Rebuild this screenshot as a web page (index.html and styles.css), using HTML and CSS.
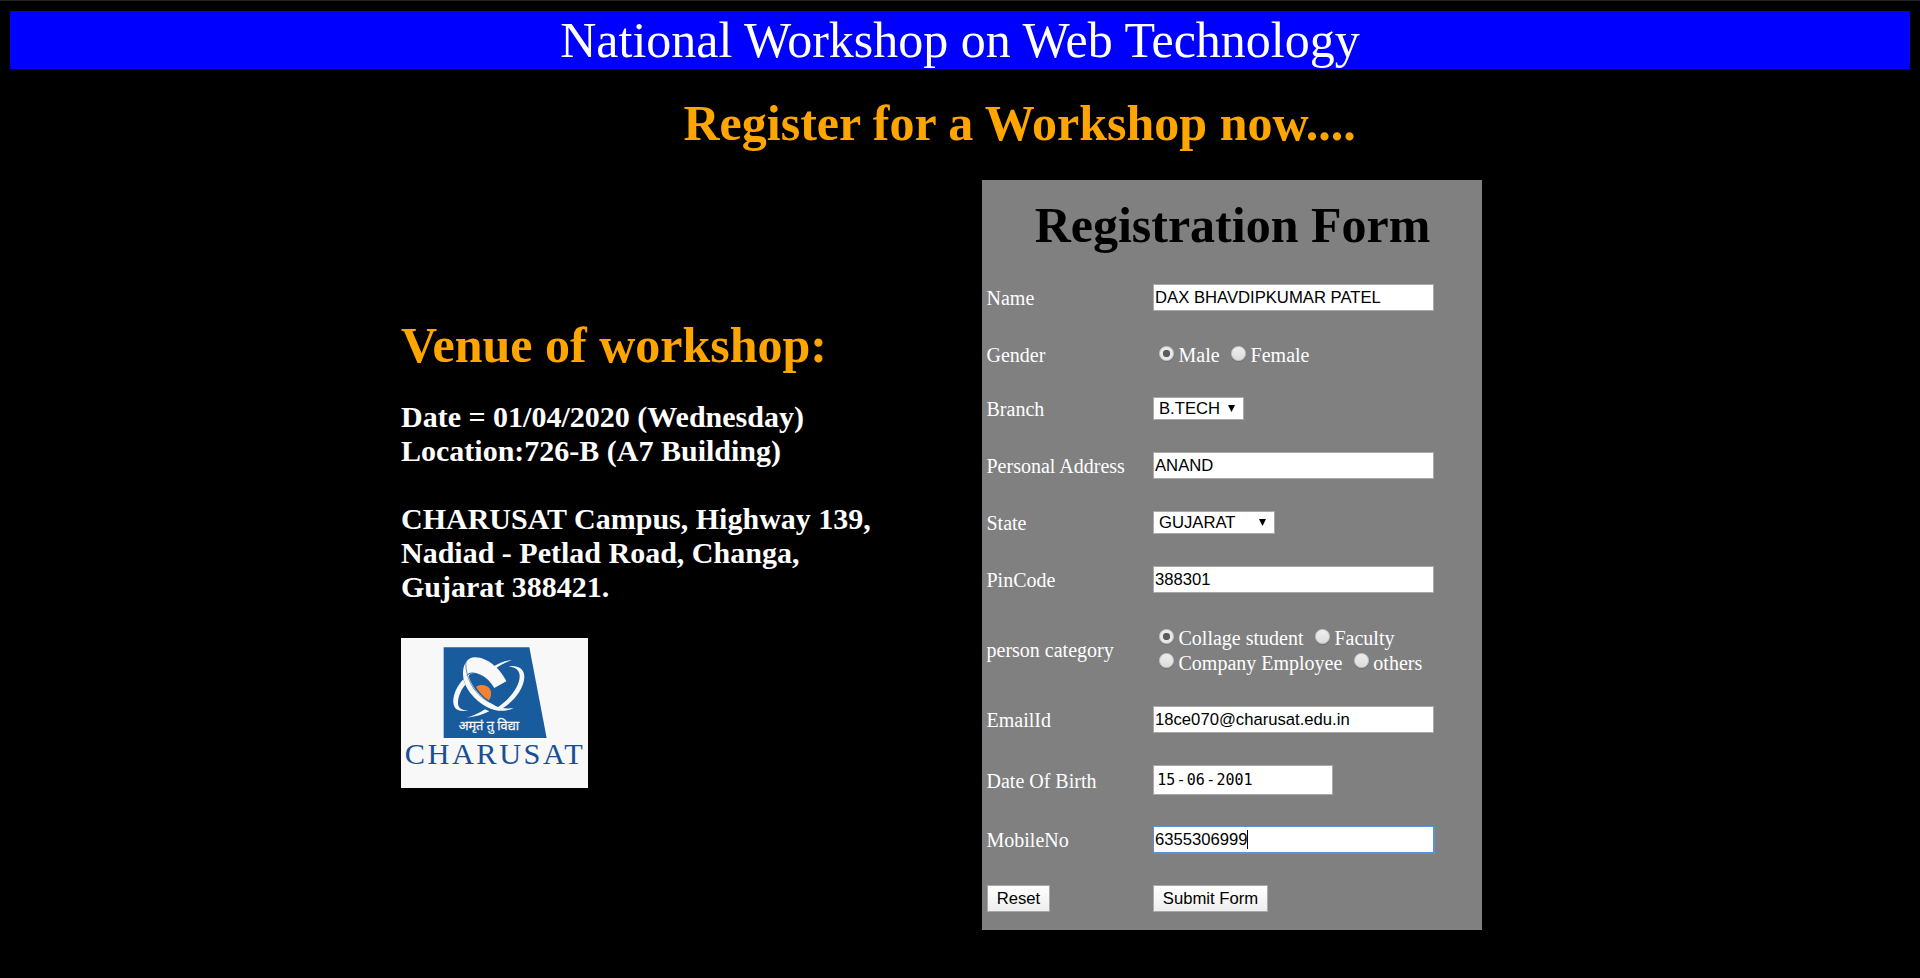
FILE: index.html
```html
<!DOCTYPE html>
<html lang="en">
<head>
<meta charset="utf-8">
<title>National Workshop on Web Technology</title>
<link rel="stylesheet" href="styles.css">
</head>
<body>
<header class="banner"><span class="banner-text">National Workshop on Web Technology</span></header>
<h1 class="headline">Register for a Workshop now....</h1>
<main class="content">
  <section class="venue">
    <h1 class="venue-title">Venue of workshop:</h1>
    <p class="venue-text">Date = 01/04/2020 (Wednesday)<br>Location:726-B (A7 Building)<br><br>CHARUSAT Campus, Highway 139,<br>Nadiad - Petlad Road, Changa,<br>Gujarat 388421.</p>
    <svg class="logo" viewBox="18 24 561 450" role="img" aria-label="CHARUSAT">
      <rect x="18" y="24" width="561" height="450" fill="#f8f8f8"/>
      <path d="M146 52H403L455 324H146Z" fill="#185c9e"/>
      <path d="M243 170C262 159 287 168 288 188C289 198 285 207 281 211C267 201 252 187 243 170Z" fill="#f58233"/>
      <path d="M204 126C206 98 220 83 239 82C278 81 318 119 334 154L298 174C283 149 262 132 241 130C229 129 222 133 221 139C231 174 260 207 302 228C320 236 337 237 356 234C335 246 302 245 280 233C236 210 202 169 204 126Z" fill="#f8f8f8"/>
      <path d="M213 92C210 122 222 159 242 183C254 198 269 210 286 218" fill="none" stroke="#185c9e" stroke-width="2"/>
      <path d="M216 136C223 127 235 128 247 132" fill="none" stroke="#185c9e" stroke-width="3"/>
      <path d="M205 148C179 174 168 213 179 232C186 243 202 245 221 241C200 241 190 234 189 221C188 202 198 178 211 164Z" fill="#f8f8f8"/>
      <path d="M289 113C307 101 327 92 351 90C333 97 313 106 299 118Z" fill="#f8f8f8"/>
      <path d="M341 109C367 105 387 115 388 139C389 177 350 223 312 241L302 236C341 212 375 169 374 138C374 121 362 112 341 109Z" fill="#f8f8f8"/>
      <path d="M214 263C239 261 264 254 283 244L270 238C252 250 234 258 214 263Z" fill="#f8f8f8"/>
      <text class="logo-motto" x="191" y="301" textLength="181" lengthAdjust="spacingAndGlyphs">अमृतं तु विद्या</text>
      <text class="logo-name" x="29" y="403" textLength="534" lengthAdjust="spacing">CHARUSAT</text>
    </svg>
  </section>
  <form class="form">
    <h1 class="form-title">Registration Form</h1>
    <div class="row row-name"><label class="label">Name</label><input class="field" type="text" value="DAX BHAVDIPKUMAR PATEL"></div>
    <div class="row row-gender"><span class="label">Gender</span>
      <div class="radios"><div class="radio-line"><label class="option"><input class="radio" type="radio" name="gender" checked>Male</label><label class="option gap-m"><input class="radio" type="radio" name="gender">Female</label></div></div></div>
    <div class="row row-select"><label class="label">Branch</label><span class="select-wrap"><select class="select branch"><option>B.TECH</option></select><svg class="arrow" viewBox="0 0 7 7"><path d="M0 0H7L3.5 7Z"/></svg></span></div>
    <div class="row row-text"><label class="label">Personal Address</label><input class="field" type="text" value="ANAND"></div>
    <div class="row row-select"><label class="label">State</label><span class="select-wrap"><select class="select state"><option>GUJARAT</option></select><svg class="arrow" viewBox="0 0 7 7"><path d="M0 0H7L3.5 7Z"/></svg></span></div>
    <div class="row row-text"><label class="label">PinCode</label><input class="field" type="text" value="388301"></div>
    <div class="row row-category"><span class="label">person category</span>
      <div class="radios">
        <div class="radio-line"><label class="option"><input class="radio" type="radio" name="category" checked>Collage student</label><label class="option gap-m"><input class="radio" type="radio" name="category">Faculty</label></div>
        <div class="radio-line"><label class="option"><input class="radio" type="radio" name="category">Company Employee</label><label class="option gap-m"><input class="radio" type="radio" name="category">others</label></div>
      </div></div>
    <div class="row row-text"><label class="label">EmailId</label><input class="field" type="text" value="18ce070@charusat.edu.in"></div>
    <div class="row row-date"><label class="label">Date Of Birth</label><div class="date"><span>15</span><span>-</span><span>06</span><span>-</span><span>2001</span></div></div>
    <div class="row row-mobile"><label class="label">MobileNo</label><span class="focus-wrap"><input class="field focused" type="text" value="6355306999"><i class="caret"></i></span></div>
    <div class="row row-buttons"><div class="label"><button class="button reset" type="button">Reset</button></div><button class="button submit" type="button">Submit Form</button></div>
  </form>
</main>
</body>
</html>
```
FILE: styles.css
```css
* { box-sizing: border-box; }
body {
  margin: 0;
  height: 978px;
  padding: 10px 10px 0;
  border-top: 1px solid #222424;
  background: #000;
  color: #fff;
  font-family: "Liberation Serif", "Times New Roman", serif;
  font-size: 20px;
  overflow: hidden;
}
h1 { margin: 0; font-size: 50px; line-height: 58px; font-weight: bold; white-space: nowrap; }
.banner { height: 58px; background: #00f; text-align: center; font-size: 50px; line-height: 58px; }
.headline { margin: 25px 0 28px 673.5px; color: orange; }
.content { display: flex; height: 750px; padding-left: 391px; }
.venue { width: 581px; padding-top: 136px; }
.venue-title { color: orange; }
.venue-text { margin: 26px 0 34px; font-size: 30px; line-height: 34px; font-weight: bold; white-space: nowrap; }
.logo { display: block; width: 187px; height: 150px; }
.logo-name { font-family: "Liberation Serif", serif; font-size: 91px; fill: #164f96; }
.logo-motto { font-family: "Noto Sans Devanagari", "Noto Sans", sans-serif; font-size: 39px; fill: #f8f8f8; stroke: #f8f8f8; stroke-width: 0.8px; }
.form { width: 500px; height: 750px; background: gray; }
.form-title { height: 90px; padding: 16px 0 0 1px; color: #000; text-align: center; }
.row { display: flex; align-items: center; height: 62px; padding-left: 4px; }
.label { width: 167px; padding-left: 0.5px; line-height: 24px; flex: none; }
.row-name { height: 55px; }
.row-gender { height: 58px; }
.row-gender .label, .row-gender .radios { padding-top: 1px; }
.row-select { height: 52px; }
.row-category { height: 78px; }
.row-date { height: 59px; }
.row-mobile { height: 60px; }
.row-buttons { height: 57px; }
.field, .select, .button, .date {
  margin: 0;
  border: 1px solid #a9a9a9;
  border-radius: 0;
  background: #fff;
  color: #000;
  outline: none;
  font-family: "Liberation Sans", Arial, sans-serif;
  font-size: 16.67px;
}
.field { width: 281px; height: 27px; padding: 0 1px; }
.row-text .field { margin-bottom: 1px; }
.radios { padding-left: 6px; }
.radio-line { display: flex; height: 25px; }
.option { display: flex; gap: 4.5px; padding-top: 1px; line-height: 25px; white-space: nowrap; }
.gap-m { margin-left: 11.5px; }
.radio {
  appearance: none;
  width: 15px;
  height: 15px;
  margin: 3px 0 0;
  border: 1px solid #c9c9c9;
  border-radius: 50%;
  background: linear-gradient(#eee, #dcdcdc);
  box-shadow: 0 1px 1px #707070;
}
.radio-line + .radio-line .radio { margin-top: 2px; }
.radio:checked { background: radial-gradient(circle, #5c5c5c 0 3.4px, #e9e9e9 4px); }
.select-wrap, .focus-wrap { position: relative; display: flex; margin-bottom: 1px; }
.select { appearance: none; height: 23px; padding: 0 5px 1px; }
.branch { width: 91px; }
.state { width: 122px; }
.arrow { position: absolute; right: 9px; top: 8px; width: 7px; height: 7px; }
.date { display: flex; align-items: center; width: 180px; height: 30px; margin-bottom: 1px; padding: 0 0 1px 2px; font-family: "DejaVu Sans Mono", monospace; font-size: 15px; }
.date span:nth-child(odd) { padding: 0 1.25px; }
.focused { border-color: #5b8fdf; box-shadow: 0 0 1px 0.5px #5b8fdf; }
.caret { position: absolute; left: 94px; top: 4px; width: 1px; height: 19px; background: #000; }
.button { height: 27px; padding: 0; background: linear-gradient(#fff, #eee); text-align: center; }
.reset { display: block; width: 63px; margin-left: 0.5px; }
.submit { width: 115px; }
```
